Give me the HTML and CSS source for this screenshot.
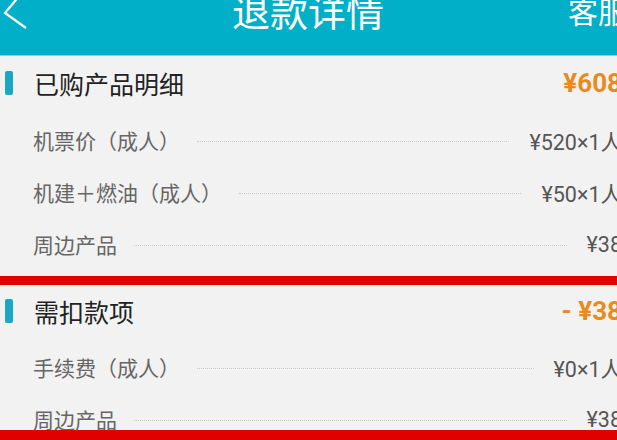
FILE: index.html
```html
<!DOCTYPE html>
<html lang="zh-CN">
<head>
  <meta charset="UTF-8" />
  <meta name="viewport" content="width=device-width, initial-scale=1.0"/>
  <title>退款详情</title>
  <link rel="stylesheet" href="styles.css">
</head>
<body>
  <div class="screen">
    <header class="nav-bar">
      <span class="nav-back">
        <svg width="30" height="44" viewBox="0 0 30 44">
          <polyline points="26,2 5,27 26,42" fill="none" stroke="#fff" stroke-width="2.2" stroke-linejoin="miter" />
        </svg>
      </span>
      <h1 class="nav-title">退款详情</h1>
      <span class="nav-action">客服</span>
    </header>

    <section class="detail-block">
      <div class="block-head">
        <span class="block-mark"></span>
        <span class="block-title">已购产品明细</span>
        <span class="block-total">¥608</span>
      </div>
      <ul class="item-list">
        <li class="item">
          <span class="item-name">机票价（成人）</span>
          <span class="item-dots"></span>
          <span class="item-price">¥520×1人</span>
        </li>
        <li class="item">
          <span class="item-name">机建＋燃油（成人）</span>
          <span class="item-dots"></span>
          <span class="item-price">¥50×1人</span>
        </li>
        <li class="item">
          <span class="item-name">周边产品</span>
          <span class="item-dots"></span>
          <span class="item-price">¥38</span>
        </li>
      </ul>
    </section>

    <div class="mark-line"></div>

    <section class="detail-block detail-block--cut">
      <div class="block-head block-head--short">
        <span class="block-mark"></span>
        <span class="block-title">需扣款项</span>
        <span class="block-total">- ¥38</span>
      </div>
      <ul class="item-list item-list--tight">
        <li class="item">
          <span class="item-name">手续费（成人）</span>
          <span class="item-dots"></span>
          <span class="item-price">¥0×1人</span>
        </li>
        <li class="item">
          <span class="item-name">周边产品</span>
          <span class="item-dots"></span>
          <span class="item-price">¥38</span>
        </li>
      </ul>
    </section>

    <div class="mark-line"></div>
  </div>
</body>
</html>
```

FILE: styles.css
```css
* {
  box-sizing: border-box;
  margin: 0;
  padding: 0;
}

html, body {
  overflow: hidden;
}

body {
  font-family: Roboto, "Noto Sans CJK SC", sans-serif;
  background: #f2f2f2;
  color: #222;
}

.screen {
  width: 622px;
  height: 440px;
}

/* top navigation */
.nav-bar {
  display: flex;
  align-items: flex-start;
  height: 56px;
  background: #02afc8;
  border-bottom: 1px solid #7dd2de;
  color: #fff;
}

.nav-back {
  flex-shrink: 0;
  width: 48px;
  margin-top: -14px;
}

.nav-back svg {
  display: block;
}

.nav-title {
  flex: 1;
  text-align: center;
  font-size: 38px;
  font-weight: 400;
  line-height: 38px;
  margin-top: -6px;
  white-space: nowrap;
}

.nav-action {
  flex-shrink: 0;
  width: 54px;
  font-size: 30px;
  line-height: 30px;
  margin-top: -2px;
  white-space: nowrap;
}

/* sections */
.detail-block--cut {
  height: 145px;
  overflow: hidden;
}

.block-head {
  display: flex;
  align-items: center;
  height: 54px;
  padding-left: 5px;
}

.block-head--short {
  height: 52px;
}

.block-mark {
  width: 8px;
  height: 24px;
  border-radius: 2px;
  background: #18a8c1;
  margin-right: 21px;
}

.block-title {
  font-size: 25px;
  color: #222;
}

.block-total {
  margin-left: auto;
  font-size: 26px;
  font-weight: 700;
  color: #e98b1c;
  white-space: pre;
}

.item-list {
  list-style: none;
  margin-top: 4px;
  padding-left: 33px;
}

.item-list--tight {
  margin-top: 4px;
}

.item {
  display: flex;
  align-items: center;
  height: 52px;
}

.item-name {
  font-size: 21px;
  color: #666;
  white-space: nowrap;
}

.item-dots {
  flex: 1;
  height: 0;
  margin: 2px 20px 0 17px;
  border-top: 1px dotted #cbcbcb;
}

.item-price {
  font-size: 21.5px;
  color: #555;
  white-space: nowrap;
}

.mark-line {
  height: 9px;
  margin-top: 6px;
  background: #e10000;
}

.detail-block--cut + .mark-line {
  margin-top: 0;
  height: 10px;
}
```
